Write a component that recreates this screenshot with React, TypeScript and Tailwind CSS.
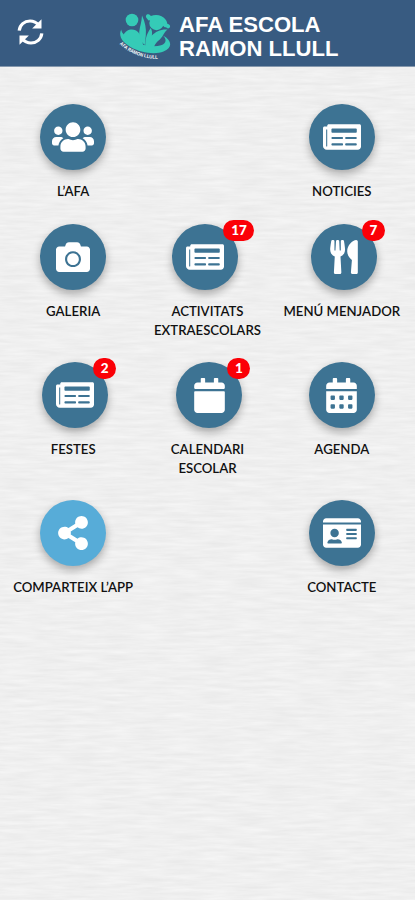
import type { IconType } from 'react-icons';
import {
  FaCalendar,
  FaCalendarAlt,
  FaCamera,
  FaIdCard,
  FaNewspaper,
  FaShareAlt,
  FaUsers,
  FaUtensils,
} from 'react-icons/fa';

type MenuItem = {
  label: string;
  icon: IconType;
  size: number;
  badge?: string;
  badgeClass?: string;
  circleClass?: string;
};

const rows: { height: string; items: (MenuItem | null)[] }[] = [
  {
    height: 'h-[120px]',
    items: [
      { label: 'L’AFA', icon: FaUsers, size: 42 },
      null,
      { label: 'NOTICIES', icon: FaNewspaper, size: 38 },
    ],
  },
  {
    height: 'h-[138px]',
    items: [
      { label: 'GALERIA', icon: FaCamera, size: 34 },
      {
        label: 'ACTIVITATS EXTRAESCOLARS',
        icon: FaNewspaper,
        size: 38,
        badge: '17',
        badgeClass: 'left-[51px] w-[31px]',
        circleClass: '-left-[2px]',
      },
      {
        label: 'MENÚ MENJADOR',
        icon: FaUtensils,
        size: 34,
        badge: '7',
        badgeClass: 'left-[51px] w-[23px]',
        circleClass: 'left-[2px]',
      },
    ],
  },
  {
    height: 'h-[138px]',
    items: [
      {
        label: 'FESTES',
        icon: FaNewspaper,
        size: 38,
        badge: '2',
        badgeClass: 'left-[51px] w-[23px]',
        circleClass: 'left-[2px]',
      },
      {
        label: 'CALENDARI ESCOLAR',
        icon: FaCalendar,
        size: 35,
        badge: '1',
        badgeClass: 'left-[51px] w-[23px]',
        circleClass: 'left-[2px]',
      },
      { label: 'AGENDA', icon: FaCalendarAlt, size: 35 },
    ],
  },
  {
    height: 'h-[138px]',
    items: [
      { label: 'COMPARTEIX L’APP', icon: FaShareAlt, size: 34, circleClass: 'bg-[#57acd8]' },
      null,
      { label: 'CONTACTE', icon: FaIdCard, size: 38 },
    ],
  },
];

const PaperTexture = () => (
  <svg className="absolute inset-0 h-full w-full" aria-hidden="true">
    <filter id="paper" x="0" y="0" width="100%" height="100%" colorInterpolationFilters="sRGB">
      <feTurbulence type="fractalNoise" baseFrequency="0.03 0.28" numOctaves="3" seed="4" />
      <feColorMatrix values="0.06 0 0 0 0.908  0.06 0 0 0 0.908  0.06 0 0 0 0.908  0 0 0 0 1" />
    </filter>
    <rect width="100%" height="100%" filter="url(#paper)" />
  </svg>
);

const RefreshIcon = () => (
  <svg width="28" height="28" viewBox="0 0 28 28" fill="none" stroke="white" strokeWidth="3.2">
    <path d="M2.2 12.6C2.8 6.8 7.4 3 13 3c3.6 0 6.6 1.5 8.800 4.200" />
    <path d="M24.8 15.4C24.2 21.2 19.6 25 14 25c-3.600 0-6.600-1.500-8.800-4.200" />
    <path d="M24.5 1.200v9.400h-9.400z" fill="white" stroke="none" />
    <path d="M2.5 26.800v-9.400h9.400z" fill="white" stroke="none" />
  </svg>
);

const Logo = () => (
  <svg width="54" height="49" viewBox="0 0 54 49">
    <g fill="#35cbb7">
      <circle cx="13" cy="8" r="6.300" />
      <circle cx="37.500" cy="11" r="7.200" />
      {/* hair */}
      <path d="M27.500 6c-1.400-2 0-4.200 2-3.700 1.200.2 1.800 1 2.400 1.800 5-2.200 12-.8 14.800 3.700 1 1.500 1.400 2.800 1.600 4 2 .2 3.300 1.700 2.700 3.300-.6 1.700-3 1.800-3.800.2-1.500.2-2.500-.6-3.700-2C39.500 9 35 7.500 29.500 8.600z" />
      {/* left figure */}
      <path d="M4.500 23c2-5 8-7 12.500-4.500 3 1.700 4.800 5 6 9L24.500 35C16.500 33 9 29.500 4.500 23z" />
      <path d="M23 3.500c3 6 4.500 13 3.800 20L25.800 33c-4.500-4-6-8.500-5.500-13.500C20.900 14 22.700 10 23 3.500z" />
      {/* right figure */}
      <path d="M26.500 35.500c-.8-6.500.8-13.500 5.300-19.500 1.300 2.600 1.600 5 1 7.500 3.700-3.800 9-6.500 15.700-6-2.500 1.500-3.500 4.500-5.200 7-3.300 4.800-6.800 5-8.300 11z" />
      {/* ring */}
      <path d="M2.200 17.500C-1 24 3.500 30.500 11.500 35c10 5.800 24.500 8 33 4.500C53.500 36 53.500 28.500 44 23.500c4 4 3.300 8-2 9.700-7.500 2.300-19.500.2-28-4.300C6.500 25 2.800 21.500 2.200 17.500z" />
    </g>
    <path id="logo-curve" d="M0.500 32Q16 47 42 47" fill="none" />
    <text className="fill-white font-['Liberation_Sans'] text-[5px] font-bold">
      <textPath href="#logo-curve" textLength="42" lengthAdjust="spacingAndGlyphs">
        AFA RAMON LLULL
      </textPath>
    </text>
  </svg>
);

const MenuButton = ({ label, icon: Icon, size, badge, badgeClass, circleClass = '' }: MenuItem) => {
  const background = circleClass.startsWith('bg-') ? '' : 'bg-[#3d7393]';

  return (
    <button className="flex w-full flex-col items-center">
      <span
        className={`relative flex size-[66px] items-center justify-center rounded-full text-white shadow-[0_4px_9px_rgba(0,0,0,0.3)] ${background} ${circleClass}`}
      >
        <Icon size={size} />
        {badge && (
          <span
            className={`absolute -top-[4px] flex h-[21px] items-center justify-center rounded-full bg-[#fb0007] text-[13.5px] font-black ${badgeClass}`}
          >
            {badge}
          </span>
        )}
      </span>
      <span className="mt-[12px] w-[124px] text-center text-[13.2px] leading-[19px] font-semibold text-[#111]">
        {label}
      </span>
    </button>
  );
};

export default function App() {
  return (
    <div className="relative isolate h-[900px] w-[415px] overflow-hidden bg-[#efefef] font-['Lato',sans-serif]">
      <PaperTexture />
      <header className="relative flex h-[67px] items-start border-b border-[#8598ad] bg-[#385b81] pl-[17px]">
        <button className="mt-[18px]" aria-label="Actualitza">
          <RefreshIcon />
        </button>
        <div className="mt-[12px] ml-[74px]">
          <Logo />
        </div>
        <h1 className="mt-[13px] ml-[6px] font-['Liberation_Sans',sans-serif] text-[22.1px] leading-[24px] font-bold whitespace-nowrap text-white">
          AFA ESCOLA
          <br />
          RAMON LLULL
        </h1>
      </header>
      <main className="relative px-[6px] pt-[37px]">
        {rows.map((row, i) => (
          <div key={i} className={`grid grid-cols-3 items-start ${row.height}`}>
            {row.items.map((item, j) => (item ? <MenuButton key={item.label} {...item} /> : <div key={j} />))}
          </div>
        ))}
      </main>
    </div>
  );
}
